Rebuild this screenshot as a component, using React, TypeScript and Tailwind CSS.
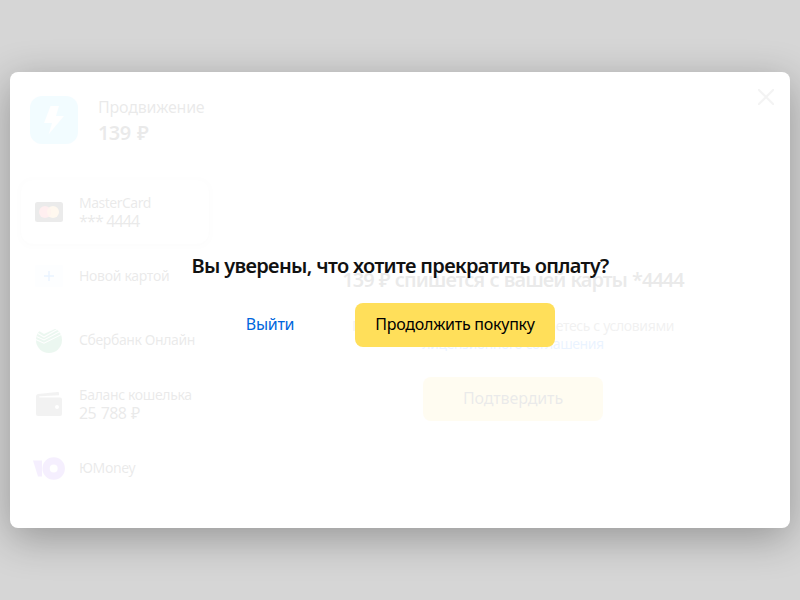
import React from 'react';

type Method = { icon: React.ReactNode; title: string; titleClass: string; detail?: string; detailClass?: string };

const MasterCardIcon = () => (
  <svg width="28" height="20" viewBox="0 0 28 20">
    <rect width="28" height="20" rx="2.5" fill="#111" />
    <circle cx="18" cy="10" r="6" fill="#ffb545" />
    <circle cx="10" cy="10" r="6" fill="#ff3f4d" />
    <path d="M14 5.500A6 6 0 0 1 14 14.500A6 6 0 0 1 14 5.500Z" fill="#ff8a45" />
  </svg>
);

const NewCardIcon = () => (
  <svg width="28" height="22" viewBox="0 0 28 22">
    <rect width="28" height="22" rx="3" fill="#eaf5ff" />
    <path d="M14 6v10M9 11h10" stroke="#0077ff" strokeWidth="1.4" />
  </svg>
);

const SberIcon = () => (
  <svg width="26" height="26" viewBox="0 0 26 26">
    <circle cx="13" cy="13" r="13" fill="#12a049" />
    <path d="M-1 -1H27V2H19L8 7L3 4L-1 7Z" fill="#fff" />
    <path d="M2 6.5L8 10L22 2M0.5 9.5L8 13L24 4.5M-1 12.2L8 16.2L26 7.2" fill="none" stroke="#fff" strokeWidth="1.1" />
  </svg>
);

const WalletIcon = () => (
  <svg width="26" height="24" viewBox="0 0 26 24">
    <path d="M0 4.5C0 3 1 2.3 2.3 2.1L21.500 0.100C22.500 0 23 0.500 23 1.500V3.200L4 4.300C2.600 4.400 2.600 5.500 4 5.500H24Q26 5.500 26 7.500V22Q26 24 24 24H2Q0 24 0 22Z" fill="#666" />
    <circle cx="21" cy="15" r="2" fill="#fff" />
  </svg>
);

const YooMoneyIcon = () => (
  <svg width="32" height="23" viewBox="0 0 32 23">
    <path d="M0 3.500H9V19.500H5Z" fill="#8b3ffd" />
    <circle cx="20.700" cy="11.500" r="7.600" fill="none" stroke="#8b3ffd" strokeWidth="7.200" />
  </svg>
);

const methods: Method[] = [
  { icon: <MasterCardIcon />, title: 'MasterCard', titleClass: 'tracking-[-0.5px]', detail: '*** 4444', detailClass: 'tracking-[-0.85px]' },
  { icon: <NewCardIcon />, title: 'Новой картой', titleClass: 'tracking-[-0.3px]' },
  { icon: <SberIcon />, title: 'Сбербанк Онлайн', titleClass: 'tracking-[-0.4px]' },
  { icon: <WalletIcon />, title: 'Баланс кошелька', titleClass: 'tracking-[-0.35px]', detail: '25 788 ₽', detailClass: 'tracking-[-0.6px] [word-spacing:1px]' },
  { icon: <YooMoneyIcon />, title: 'ЮMoney', titleClass: 'tracking-[-0.4px]' },
];

function Payment() {
  return (
    <div className="flex h-full opacity-[0.08]">
      <aside className="w-[226px] shrink-0 pt-6">
        <div className="flex h-12 items-center pl-5">
          <div className="flex h-12 w-12 items-center justify-center rounded-[12px] bg-[#66dcff]">
            <svg width="20" height="29" viewBox="0 0 20 29" fill="#fff">
              <path d="M6.500 0H15L12 10H20L4.500 28.500L8 17H0Z" />
            </svg>
          </div>
          <div className="ml-5">
            <div className="whitespace-nowrap text-base leading-6 tracking-[-0.2px]">Продвижение</div>
            <div className="pt-px text-[20px] font-semibold leading-[26px] tracking-[-0.6px] [word-spacing:2px]">139 ₽</div>
          </div>
        </div>
        <div className="mt-9">
          {methods.map((method, index) => (
            <div
              key={method.title}
              className={`ml-[11px] mr-[27px] flex h-16 items-center rounded-xl ${index === 0 ? 'shadow-[0_1px_4px_rgba(0,0,0,0.15)]' : ''}`}
            >
              <div className="ml-3 flex w-8 shrink-0 justify-center">{method.icon}</div>
              <div className="ml-[14px] whitespace-nowrap leading-[18px]">
                <div className={`text-sm leading-[18px] ${method.titleClass}`}>{method.title}</div>
                {method.detail && <div className={`text-base leading-[18px] ${method.detailClass}`}>{method.detail}</div>}
              </div>
            </div>
          ))}
        </div>
      </aside>
      <main className="flex flex-1 flex-col items-center whitespace-nowrap text-center">
        <div className="flex h-[50px] w-full items-center justify-end pr-4">
          <svg width="16" height="16" viewBox="0 0 16 16" stroke="#777" strokeWidth="2">
            <path d="M0 0L16 16M16 0L0 16" />
          </svg>
        </div>
        <h1 className="mt-[145px] text-[20px] font-semibold leading-[26px] tracking-[-1px] [word-spacing:1px]">139 ₽ спишется с вашей карты *4444</h1>
        <p className="mt-6 text-sm leading-[18px] tracking-[-0.37px] text-[#555]">
          Продолжая оплату, вы соглашаетесь с условиями
          <br />
          <a className="tracking-[-0.42px] text-[#0077ff]">лицензионного соглашения</a>
        </p>
        <button className="mt-6 h-11 w-[180px] rounded-lg bg-[#ffdf5a] pb-0.5 text-base tracking-[-0.1px]">Подтвердить</button>
      </main>
    </div>
  );
}

export default function App() {
  return (
    <div className="flex h-screen items-center justify-center overflow-hidden bg-[#d6d6d6] font-['Noto_Sans',sans-serif] text-black">
      <div className="relative h-[456px] w-[780px] rounded-lg bg-white shadow-[0_10px_40px_rgba(0,0,0,0.3)]">
        <Payment />
        <div className="absolute inset-0 flex flex-col items-center whitespace-nowrap pt-[181px]">
          <h2 className="text-[20px] font-semibold leading-[26px] tracking-[-0.65px] text-[#111]">Вы уверены, что хотите прекратить оплату?</h2>
          <div className="mt-6 flex w-[390px] justify-between pr-10">
            <button className="h-11 w-[130px] pb-0.5 text-base tracking-[-0.3px] text-[#0066dd]">Выйти</button>
            <button className="h-11 w-[200px] rounded-lg bg-[#ffdf5a] pb-0.5 text-base tracking-[-0.25px]">Продолжить покупку</button>
          </div>
        </div>
      </div>
    </div>
  );
}
